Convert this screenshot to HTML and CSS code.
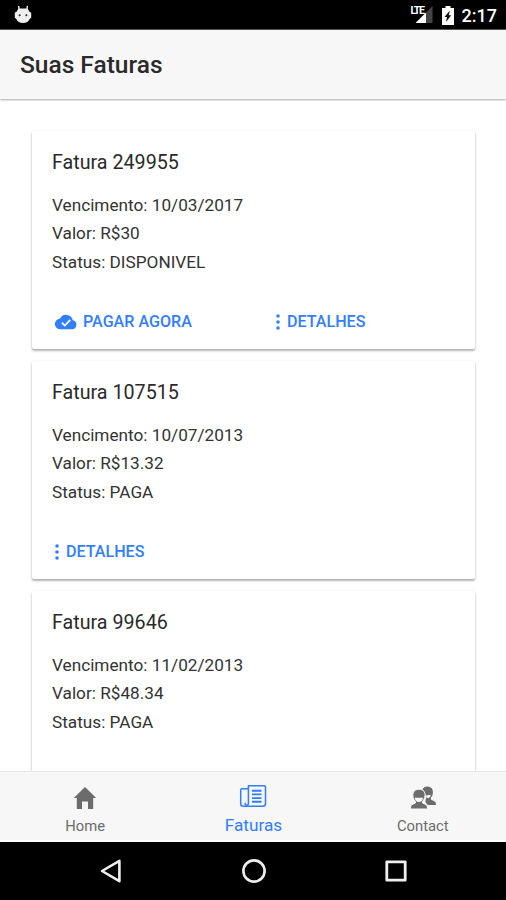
FILE: index.html
```html
<!DOCTYPE html>
<html lang="pt-BR">
<head>
    <meta charset="UTF-8">
    <meta name="viewport" content="width=device-width, initial-scale=1">
    <title>Suas Faturas</title>
    <link rel="stylesheet" href="styles.css">
</head>
<body>
    <svg class="symbols" aria-hidden="true">
        <symbol id="cloud-done" viewBox="0 0 22 16">
            <path fill="currentColor" d="M17.8 6.2A6.9 6.9 0 0 0 4.9 4.7 5.3 5.3 0 0 0 5.5 15.3H17a4.6 4.6 0 0 0 .8-9.1z"/>
            <path fill="none" stroke="#fff" stroke-width="1.8" d="M6.8 8.7l3 2.9 5.5-5.7"/>
        </symbol>
        <symbol id="more" viewBox="0 0 4 16">
            <circle cx="2" cy="2" r="1.8" fill="currentColor"/>
            <circle cx="2" cy="8" r="1.8" fill="currentColor"/>
            <circle cx="2" cy="14" r="1.8" fill="currentColor"/>
        </symbol>
    </svg>

    <div class="status-bar">
        <svg class="debug-icon" width="18" height="20" viewBox="0 0 18 20">
            <path fill="none" stroke="#eee" stroke-width="1.4" d="M5.2 5L4.6 .8M12.8 5l.6-4.2"/>
            <path fill="#eee" d="M4.5 3.5h9l2 3.2 1.7 1v5l-1.5 1.2Q14 18 9 18t-6.7-4.1L.8 12.7v-5l1.7-1z"/>
            <circle cx="5.6" cy="10.3" r="1" fill="#222"/>
            <circle cx="12.4" cy="10.3" r="1" fill="#222"/>
        </svg>
        <div class="status-right">
            <div class="signal">
                <svg width="23" height="19" viewBox="0 0 23 19">
                    <path fill="#444" d="M22.5 1v17H16V7.5z"/>
                    <path fill="#fff" d="M16 7.5V18H5.5z"/>
                </svg>
                <span class="lte">LTE</span>
            </div>
            <svg class="battery" width="12" height="19" viewBox="0 0 12 19">
                <path fill="#fff" d="M3.5 0h5v2H12v17H0V2h3.5z"/>
                <path fill="#111" d="M7.8 4.5L2.5 11H5l-1 5 5.3-6.7H6.8z"/>
            </svg>
            <span class="clock">2:17</span>
        </div>
    </div>

    <header class="toolbar">
        <h1>Suas Faturas</h1>
    </header>

    <main class="content">
        <div class="card">
            <h2>Fatura 249955</h2>
            <p>Vencimento: 10/03/2017</p>
            <p>Valor: R$30</p>
            <p>Status: DISPONIVEL</p>
            <div class="actions">
                <button class="btn btn-pay"><svg width="22" height="16"><use href="#cloud-done"/></svg>PAGAR AGORA</button>
                <button class="btn"><svg width="4" height="16"><use href="#more"/></svg>DETALHES</button>
            </div>
        </div>

        <div class="card">
            <h2>Fatura 107515</h2>
            <p>Vencimento: 10/07/2013</p>
            <p>Valor: R$13.32</p>
            <p>Status: PAGA</p>
            <div class="actions">
                <button class="btn"><svg width="4" height="16"><use href="#more"/></svg>DETALHES</button>
            </div>
        </div>

        <div class="card">
            <h2>Fatura 99646</h2>
            <p>Vencimento: 11/02/2013</p>
            <p>Valor: R$48.34</p>
            <p>Status: PAGA</p>
        </div>
    </main>

    <nav class="tabs">
        <a class="tab">
            <svg width="24" height="24" viewBox="0 0 24 24">
                <path fill="currentColor" d="M12 1L.8 12h3v11H9v-7.5h6V23h5.2V12h3z"/>
            </svg>
            <span>Home</span>
        </a>
        <a class="tab active">
            <svg width="28" height="24" viewBox="0 0 28 24">
                <g fill="none" stroke="currentColor" stroke-width="1.5">
                    <path d="M9 1.7h16.2q1.3 0 1.3 1.3v16.5q0 2.8-2.8 2.8H4.5q-2.8 0-2.8-2.8V6q0-1.3 1.3-1.3h6"/>
                    <path d="M9.4 1.7v17.5q0 2-1.5 2-1.9 0-1.9-2.4"/>
                    <path stroke-width="1.9" d="M13 6.7h9.5M13 10.4h9.5M13 14.1h9.5M13 17.8h9.5"/>
                </g>
            </svg>
            <span>Faturas</span>
        </a>
        <a class="tab">
            <svg width="26" height="24" viewBox="0 0 26 24">
                <g fill="currentColor">
                    <path d="M12.5 2.8Q15-.1 19 .8q4.2 1 3.9 6.2-.2 3.2-2 4.8v1.6l4.6 2.5.5 3.2h-8.2l-2.5-3.1 1-5.6z"/>
                    <path stroke="#f7f7f7" stroke-width="1" d="M9 3.3c4.6 0 6.4 2.8 6 6.5-.2 2.5-1.2 4.2-2.5 5.5V17l4.4 2 .8 4H.3l.8-4 4.4-2v-1.7C4 14 3 12.3 2.9 9.8 2.7 6.1 4.5 3.3 9 3.3z"/>
                </g>
                <path fill="#f7f7f7" d="M4.6 11.8h8.6Q12.2 15.9 9 16.1t-4.4-4.3z"/>
                <path fill="#f7f7f7" d="M16 9.6l4.8-.8q-.3 3-2.5 3.4l-2-.7z"/>
            </svg>
            <span>Contact</span>
        </a>
    </nav>

    <div class="nav-bar">
        <svg width="24" height="26" viewBox="0 0 24 26">
            <path fill="none" stroke="#eee" stroke-width="2.6" stroke-linejoin="round" d="M20.4 2.8v20.4L3 13z"/>
        </svg>
        <svg width="24" height="26" viewBox="0 0 24 26">
            <circle cx="12" cy="13" r="10.6" fill="none" stroke="#eee" stroke-width="2.6"/>
        </svg>
        <svg width="24" height="26" viewBox="0 0 24 26">
            <rect x="2.8" y="3.8" width="18.4" height="18.4" fill="none" stroke="#eee" stroke-width="2.8" stroke-linejoin="round"/>
        </svg>
    </div>
</body>
</html>
```

FILE: styles.css
```css
* {
    box-sizing: border-box;
}

body {
    display: flex;
    flex-direction: column;
    height: 900px;
    margin: 0;
    overflow: hidden;
    background: #fff;
    color: #2a2a2a;
    font-family: Roboto, "Liberation Sans", sans-serif;
}

svg {
    display: block;
    flex: none;
}

.symbols {
    display: none;
}

/* barra de status */
.status-bar {
    display: flex;
    flex: none;
    justify-content: space-between;
    height: 30px;
    padding: 5px 9px 0 14px;
    background: #000;
    border-bottom: 1px solid #555;
}

.status-right {
    display: flex;
    color: #fff;
}

.signal {
    position: relative;
    margin-right: 9px;
}

.lte {
    position: absolute;
    top: 1px;
    left: 1px;
    font-size: 10.5px;
    font-weight: 700;
    line-height: 9px;
    letter-spacing: -1.3px;
}

.battery {
    margin-top: 1px;
}

.clock {
    margin-left: 8px;
    font-size: 18px;
    font-weight: 500;
    line-height: 22px;
}

.toolbar {
    position: relative;
    flex: none;
    height: 69px;
    padding: 0 20px;
    background: #f7f7f7;
    box-shadow: 0 1px 2px rgba(0, 0, 0, 0.35);
}

.toolbar h1 {
    margin: 0;
    font-size: 24.5px;
    font-weight: 500;
    line-height: 69px;
    color: #2a2a2a;
}

/* lista de faturas */
.content {
    flex: 1;
    min-height: 0;
    padding: 32px 31px 0 32px;
    overflow: hidden;
}

.card {
    height: 218px;
    margin-bottom: 12px;
    padding: 17px 20px 0;
    border-radius: 2px;
    background: #fff;
    box-shadow: 0 2px 2px rgba(0, 0, 0, 0.22), 0 1px 3px rgba(0, 0, 0, 0.16);
}

.card h2 {
    margin: 0 0 13px;
    font-size: 19.7px;
    font-weight: 400;
    line-height: 30px;
}

.card p {
    margin: 0;
    color: #333;
    font-size: 17.2px;
    line-height: 28.3px;
}

.actions {
    display: grid;
    grid-template-columns: 221px 1fr;
    margin-top: 33px;
    padding-left: 3px;
}

.btn {
    display: flex;
    align-items: center;
    gap: 7px;
    height: 26px;
    padding: 0;
    border: 0;
    background: none;
    color: #327eff;
    font-family: inherit;
    font-size: 16.1px;
    font-weight: 500;
    white-space: nowrap;
}

.btn-pay {
    gap: 6px;
}

/* abas */
.tabs {
    display: grid;
    flex: none;
    grid-template-columns: repeat(3, 1fr);
    height: 71px;
    padding-left: 1px;
    background: #f7f7f7;
    border-top: 1px solid #e8e8e8;
    border-bottom: 2px solid #fff;
}

.tab {
    display: flex;
    flex-direction: column;
    align-items: center;
    padding-top: 14px;
    color: #6c6c6c;
    font-size: 14.8px;
    line-height: 20px;
}

.tab:last-child {
    padding-left: 2px;
}

.tab span {
    margin-top: 6px;
}

.tab.active {
    padding-top: 12px;
    color: #327eff;
    font-size: 17.2px;
}

.tab.active span {
    margin-top: 7px;
}

.nav-bar {
    display: flex;
    flex: none;
    justify-content: space-between;
    height: 58px;
    padding: 16px 98px 0 99px;
    background: #000;
}
```
